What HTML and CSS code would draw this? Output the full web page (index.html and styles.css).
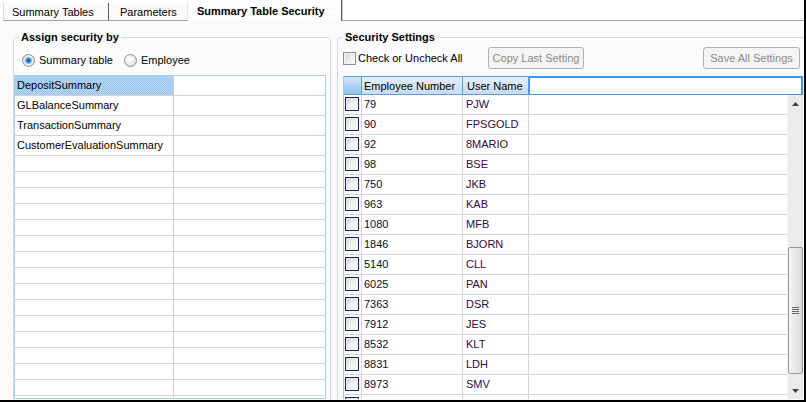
FILE: index.html
```html
<!DOCTYPE html>
<html>
<head>
<meta charset="utf-8">
<title>Summary Table Security</title>
<link rel="stylesheet" href="styles.css">
</head>
<body>
<div class="window">
  <div class="tabs">
    <div class="tab tab-first">Summary Tables</div>
    <div class="tab tab-second">Parameters</div>
    <div class="tab tab-active">Summary Table Security</div>
    <div class="tab-rest"></div>
  </div>
  <div class="page">
    <fieldset class="group group-left">
      <legend>Assign security by</legend>
      <div class="radio-row">
        <div class="opt"><span class="radio on"></span>Summary table</div>
        <div class="opt"><span class="radio"></span>Employee</div>
      </div>
      <div class="list">
        <div class="lrow"><div class="lc lc1 sel">DepositSummary</div><div class="lc lc2"></div></div>
        <div class="lrow"><div class="lc lc1">GLBalanceSummary</div><div class="lc lc2"></div></div>
        <div class="lrow"><div class="lc lc1">TransactionSummary</div><div class="lc lc2"></div></div>
        <div class="lrow"><div class="lc lc1">CustomerEvaluationSummary</div><div class="lc lc2"></div></div>
        <div class="lrow empty"><div class="lc lc1"></div><div class="lc lc2"></div></div>
        <div class="lrow empty"><div class="lc lc1"></div><div class="lc lc2"></div></div>
        <div class="lrow empty"><div class="lc lc1"></div><div class="lc lc2"></div></div>
        <div class="lrow empty"><div class="lc lc1"></div><div class="lc lc2"></div></div>
        <div class="lrow empty"><div class="lc lc1"></div><div class="lc lc2"></div></div>
        <div class="lrow empty"><div class="lc lc1"></div><div class="lc lc2"></div></div>
        <div class="lrow empty"><div class="lc lc1"></div><div class="lc lc2"></div></div>
        <div class="lrow empty"><div class="lc lc1"></div><div class="lc lc2"></div></div>
        <div class="lrow empty"><div class="lc lc1"></div><div class="lc lc2"></div></div>
        <div class="lrow empty"><div class="lc lc1"></div><div class="lc lc2"></div></div>
        <div class="lrow empty"><div class="lc lc1"></div><div class="lc lc2"></div></div>
        <div class="lrow empty"><div class="lc lc1"></div><div class="lc lc2"></div></div>
        <div class="lrow empty"><div class="lc lc1"></div><div class="lc lc2"></div></div>
        <div class="lrow empty"><div class="lc lc1"></div><div class="lc lc2"></div></div>
        <div class="lrow empty"><div class="lc lc1"></div><div class="lc lc2"></div></div>
        <div class="lrow empty"><div class="lc lc1"></div><div class="lc lc2"></div></div>
      </div>
    </fieldset>
    <fieldset class="group group-right">
      <legend>Security Settings</legend>
      <div class="controls">
        <div class="opt opt-check"><span class="check"></span>Check or Uncheck All</div>
        <div class="btn">Copy Last Setting</div>
        <div></div>
        <div class="btn">Save All Settings</div>
      </div>
      <div class="dgv">
        <div class="dgv-head">
          <div class="hc hc-corner"></div>
          <div class="hc c-num">Employee Number</div>
          <div class="hc c-name">User Name</div>
          <div class="hc hc-fill"></div>
        </div>
        <div class="dgv-body">
          <div class="rows">
            <div class="dr"><div class="dc c-chk"><span class="cb"></span></div><div class="dc c-num">79</div><div class="dc c-name">PJW</div><div class="dc c-fill"></div></div>
            <div class="dr"><div class="dc c-chk"><span class="cb"></span></div><div class="dc c-num">90</div><div class="dc c-name">FPSGOLD</div><div class="dc c-fill"></div></div>
            <div class="dr"><div class="dc c-chk"><span class="cb"></span></div><div class="dc c-num">92</div><div class="dc c-name">8MARIO</div><div class="dc c-fill"></div></div>
            <div class="dr"><div class="dc c-chk"><span class="cb"></span></div><div class="dc c-num">98</div><div class="dc c-name">BSE</div><div class="dc c-fill"></div></div>
            <div class="dr"><div class="dc c-chk"><span class="cb"></span></div><div class="dc c-num">750</div><div class="dc c-name">JKB</div><div class="dc c-fill"></div></div>
            <div class="dr"><div class="dc c-chk"><span class="cb"></span></div><div class="dc c-num">963</div><div class="dc c-name">KAB</div><div class="dc c-fill"></div></div>
            <div class="dr"><div class="dc c-chk"><span class="cb"></span></div><div class="dc c-num">1080</div><div class="dc c-name">MFB</div><div class="dc c-fill"></div></div>
            <div class="dr"><div class="dc c-chk"><span class="cb"></span></div><div class="dc c-num">1846</div><div class="dc c-name">BJORN</div><div class="dc c-fill"></div></div>
            <div class="dr"><div class="dc c-chk"><span class="cb"></span></div><div class="dc c-num">5140</div><div class="dc c-name">CLL</div><div class="dc c-fill"></div></div>
            <div class="dr"><div class="dc c-chk"><span class="cb"></span></div><div class="dc c-num">6025</div><div class="dc c-name">PAN</div><div class="dc c-fill"></div></div>
            <div class="dr"><div class="dc c-chk"><span class="cb"></span></div><div class="dc c-num">7363</div><div class="dc c-name">DSR</div><div class="dc c-fill"></div></div>
            <div class="dr"><div class="dc c-chk"><span class="cb"></span></div><div class="dc c-num">7912</div><div class="dc c-name">JES</div><div class="dc c-fill"></div></div>
            <div class="dr"><div class="dc c-chk"><span class="cb"></span></div><div class="dc c-num">8532</div><div class="dc c-name">KLT</div><div class="dc c-fill"></div></div>
            <div class="dr"><div class="dc c-chk"><span class="cb"></span></div><div class="dc c-num">8831</div><div class="dc c-name">LDH</div><div class="dc c-fill"></div></div>
            <div class="dr"><div class="dc c-chk"><span class="cb"></span></div><div class="dc c-num">8973</div><div class="dc c-name">SMV</div><div class="dc c-fill"></div></div>
            <div class="dr"><div class="dc c-chk"><span class="cb"></span></div><div class="dc c-num"></div><div class="dc c-name"></div><div class="dc c-fill"></div></div>
          </div>
          <div class="vscroll">
            <div class="sb-btn"><svg width="7" height="4" viewBox="0 0 7 4"><path d="M0 4 L3.5 0 L7 4 Z" fill="#404040"/></svg></div>
            <div class="sb-track-top"></div>
            <div class="sb-thumb"><svg width="7" height="8" viewBox="0 0 7 8"><path d="M0 0.5 H7 M0 2.5 H7 M0 4.5 H7 M0 6.5 H7" stroke="#6a6a6a" stroke-width="1"/></svg></div>
            <div class="sb-track-bottom"></div>
            <div class="sb-btn"><svg width="7" height="4" viewBox="0 0 7 4"><path d="M0 0 L3.5 4 L7 0 Z" fill="#404040"/></svg></div>
          </div>
        </div>
      </div>
    </fieldset>
  </div>
</div>
</body>
</html>
```
FILE: styles.css
```css
* { box-sizing: border-box; }

html, body {
  margin: 0;
  padding: 0;
  background: #fff;
}

body {
  font-family: "Liberation Sans", Arial, sans-serif;
  font-size: 11px;
  color: #000;
}

.window {
  width: 806px;
  height: 402px;
  border-right: 2px solid #000;
  border-bottom: 2px solid #000;
  overflow: hidden;
  display: flex;
  flex-direction: column;
  background: #fff;
}

/* ---------- tabs ---------- */
.tabs {
  display: flex;
  align-items: flex-end;
  height: 21px;
  flex: none;
  background: #fff;
}

.tab {
  height: 18px;
  line-height: 18px;
  border-bottom: 1px solid #a5a5a5;
  background: #fafafa;
  white-space: nowrap;
  flex: none;
}

.tab-first {
  margin-left: 3px;
  width: 106px;
  padding-left: 8px;
  border-left: 1px solid #dadada;
  border-right: 1px solid #5e5e5e;
  box-shadow: 1px 0 0 #c9c9c9;
}

.tab-second {
  width: 79px;
  padding-left: 11px;
  border-right: 1px solid #e4e4e4;
}

.tab-active {
  height: 21px;
  line-height: 22px;
  width: 154px;
  padding-left: 9px;
  font-weight: bold;
  background: #fdfdfe;
  border-bottom: none;
  border-right: 1px solid #5e5e5e;
  box-shadow: 1px 0 0 #c9c9c9;
}

.tab-rest {
  flex: 1;
  height: 1px;
  background: #a5a5a5;
}

/* ---------- page ---------- */
.page {
  flex: 1;
  display: flex;
  align-items: flex-start;
  gap: 6px;
  padding: 10px 0 0 12px;
  border-left: 1px solid #fdfdfd;
  background: #fbfbfd;
}

.group {
  flex: none;
  margin: 0;
  min-width: 0;
  height: 400px;
  border: 1px solid #d5d9df;
  border-radius: 3px;
}

.group legend {
  padding: 0 2px;
  height: 13px;
  line-height: 13px;
  font-weight: bold;
  font-size: 11px;
}

.group-left {
  width: 318px;
  padding: 0 4px 0 0;
}

.group-left legend {
  margin-left: 5px;
}

.group-right {
  width: 480px;
  padding: 0 0 0 5px;
}

/* ---------- radio buttons / checks ---------- */
.radio-row {
  display: flex;
  align-items: center;
  gap: 11px;
  height: 14px;
  margin: 9px 0 8px 8px;
}

.opt {
  display: flex;
  align-items: center;
  gap: 4px;
  white-space: nowrap;
}

.radio {
  width: 13px;
  height: 13px;
  border-radius: 50%;
  border: 1px solid #8e8f8f;
  background: radial-gradient(circle at 40% 35%, #ffffff 0, #f0f0f0 40%, #d2d2d2 100%);
}

.radio.on {
  background: radial-gradient(circle at 50% 50%, #0f4c94 0, #2b74c4 1.5px, #7fb9ec 3px, #cfe6fa 3.8px, #eeeeee 4.6px, #d0d0d0 100%);
}

.opt-check {
  gap: 2px;
}

.check {
  width: 13px;
  height: 13px;
  border: 1px solid #8e8f8f;
  background: linear-gradient(135deg, #d6d6d6, #f2f2f2 70%, #fafafa);
  box-shadow: inset 0 0 0 1px #f4f4f4;
}

/* ---------- left list ---------- */
.list {
  width: 312px;
  height: 324px;
  border: 1px solid #a3d3e3;
  background: #fff;
  overflow: hidden;
}

.lrow {
  display: flex;
  height: 20px;
  border-bottom: 1px solid #d2d2d2;
}

.lrow.empty {
  height: 16px;
}

.lc {
  height: 100%;
  line-height: 19px;
  white-space: nowrap;
}

.lc1 {
  width: 159px;
  flex: none;
  padding-left: 2px;
  border-right: 1px solid #d2d2d2;
}

.lc2 {
  flex: 1;
}

.sel {
  background: repeating-conic-gradient(#98c3ef 0 25%, #b8d9f8 0 50%) 0 0 / 2px 2px;
}

/* ---------- right controls ---------- */
.controls {
  display: grid;
  grid-template-columns: 145px 96px 1fr 97px;
  align-items: center;
  width: 457px;
  height: 22px;
  margin: 3px 0 7px 0;
}

.btn {
  height: 22px;
  line-height: 20px;
  text-align: center;
  color: #8a8a8a;
  border: 1px solid #adb2b5;
  border-radius: 3px;
  background: #f4f4f4;
  white-space: nowrap;
}

/* ---------- data grid ---------- */
.dgv {
  width: 460px;
  border-left: 1px solid #a3c9e0;
  background: #fff;
}

.dgv-head {
  display: flex;
  height: 19px;
}

.hc {
  height: 19px;
  line-height: 18px;
  border: 1px solid #5c9de4;
  border-left: none;
  background: linear-gradient(#e5effb, #c7dcf5);
  padding-left: 3px;
  white-space: nowrap;
  overflow: hidden;
  flex: none;
}

.hc-corner {
  width: 18px;
  background: linear-gradient(#d4e6f9, #92c1f0);
}

.hc.c-name {
  padding-left: 4px;
}

.hc-fill {
  flex: 1;
  background: #fff;
  border: 1px solid #3a96ef;
  border-top-width: 2px;
  border-right-width: 2px;
}

.dgv-body {
  display: flex;
  height: 304px;
}

.rows {
  width: 443px;
  overflow: hidden;
}

.dr {
  display: flex;
  height: 20px;
  border-bottom: 1px solid #d5d5d5;
}

.dc {
  height: 19px;
  line-height: 19px;
  border-right: 1px solid #d5d5d5;
  white-space: nowrap;
  flex: none;
}

.c-chk { width: 18px; }
.c-num { width: 101px; padding-left: 2px; color: #0c0c28; }
.c-name { width: 66px; padding-left: 3px; color: #35093a; }
.c-fill { width: 258px; border-right: none; }

.hc.c-num, .hc.c-name { color: #000; }

.cb {
  display: block;
  width: 14px;
  height: 14px;
  margin: 2px 0 0 1px;
  border: 1px solid #17227a;
  background: linear-gradient(135deg, #d8d8d8, #eeeeee 45%, #fbfbfb);
}

/* ---------- scrollbar ---------- */
.vscroll {
  width: 16px;
  display: flex;
  flex-direction: column;
  background: #ebebeb;
  border-left: 1px solid #f3f3f3;
}

.sb-btn {
  height: 17px;
  flex: none;
  display: flex;
  align-items: center;
  justify-content: center;
}

.sb-track-top {
  height: 135px;
  flex: none;
}

.sb-thumb {
  height: 127px;
  flex: none;
  border: 1px solid #989898;
  border-radius: 2px;
  background: linear-gradient(90deg, #f4f4f4, #e6e6e6 60%, #d7d7d7);
  display: flex;
  align-items: center;
  justify-content: center;
}

.sb-track-bottom {
  flex: 1;
}
```
